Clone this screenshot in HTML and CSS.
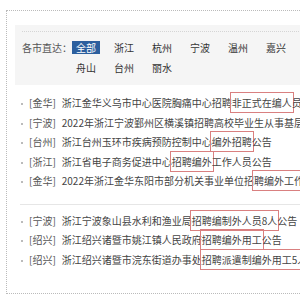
FILE: index.html
```html
<!DOCTYPE html>
<html lang="zh-CN">
<head>
    <meta charset="UTF-8">
    <title>浙江招聘</title>
    <link rel="stylesheet" href="styles.css">
</head>
<body>
    <div class="wrap">
        <div class="city-nav">
            <div class="city-inner">
                <span class="city-label">各市直达：</span>
                <div class="city-list">
                    <span class="city"><a class="active" href="#">全部</a></span>
                    <span class="city"><a href="#">浙江</a></span>
                    <span class="city"><a href="#">杭州</a></span>
                    <span class="city"><a href="#">宁波</a></span>
                    <span class="city"><a href="#">温州</a></span>
                    <span class="city"><a href="#">嘉兴</a></span>
                    <span class="city"><a href="#">舟山</a></span>
                    <span class="city"><a href="#">台州</a></span>
                    <span class="city"><a href="#">丽水</a></span>
                </div>
            </div>
        </div>

        <ul class="news">
            <li><span class="area">[金华]</span>浙江金华义乌市中心医院胸痛中心招聘<span class="mark">非正式在编人</span>员公告</li>
            <li><span class="area">[宁波]</span>2022年浙江宁波鄞州区横溪镇招聘高校毕业生从事基层工作人员公告</li>
            <li><span class="area">[台州]</span>浙江台州玉环市疾病预防控制中心<span class="mark">编外招聘</span>公告</li>
            <li><span class="area">[浙江]</span>浙江省电子商务促进中心<span class="mark">招聘编外</span>工作人员公告</li>
            <li><span class="area">[金华]</span>2022年浙江金华东阳市部分机关事业单位招<span class="mark">聘编外工作人员</span>公告</li>
        </ul>
        <ul class="news">
            <li><span class="area">[宁波]</span>浙江宁波象山县水利和渔业局<span class="mark">招聘编制外人员8人</span>公告</li>
            <li><span class="area">[绍兴]</span>浙江绍兴诸暨市姚江镇人民政府<span class="mark">招聘编外用工</span>公告</li>
            <li><span class="area">[绍兴]</span>浙江绍兴诸暨市浣东街道办事处<span class="mark">招聘派遣制编外用工5人</span>公告</li>
        </ul>
    </div>
</body>
</html>
```

FILE: styles.css
```css
/* General Styles */
html, body {
    overflow: hidden;
}

body {
    margin: 0;
    font-family: "Noto Sans CJK SC", "DejaVu Sans", sans-serif;
    font-size: 10px;
    color: #444;
    background-color: #fff;
}

a {
    color: #333;
    text-decoration: none;
}

.wrap {
    box-sizing: border-box;
    width: 330px;
    height: 284px;
    margin: 10px 0 0 6px;
    padding: 14px 0 0 8px;
    border: 1px dotted #bbb;
}

/* City Nav */
.city-nav {
    background-color: #f5f5f5;
    padding: 6px 0 7px 7px;
}

.city-inner {
    display: flex;
    border-top: 1px dotted #d5d5d5;
    padding-top: 6px;
}

.city-label {
    width: 50px;
    line-height: 20px;
    color: #555;
}

.city-list {
    display: flex;
    flex-wrap: wrap;
    width: 240px;
}

.city {
    width: 38px;
    line-height: 20px;
}

.city a {
    display: inline-block;
    line-height: 13px;
    padding: 0 4px;
}

.city a.active {
    background-color: #2c5f9e;
    color: #fff;
}

/* News List */
.news {
    list-style: none;
    margin: 8px 0 0 5px;
    padding: 0;
}

.news + .news {
    margin-top: 13px;
    padding-top: 6px;
    border-top: 1px solid #e6e6e6;
}

.news li {
    line-height: 19.5px;
    white-space: nowrap;
    color: #444;
}

.news li::before {
    content: "";
    display: inline-block;
    width: 2px;
    height: 2px;
    margin: 0 6px 0 1px;
    vertical-align: middle;
    background-color: #bbb;
}

.area {
    color: #555;
    margin-right: 6px;
}

.mark {
    padding: 2px 1px;
    margin: 0 -2px;
    border: 1px solid #d98080;
}
```
